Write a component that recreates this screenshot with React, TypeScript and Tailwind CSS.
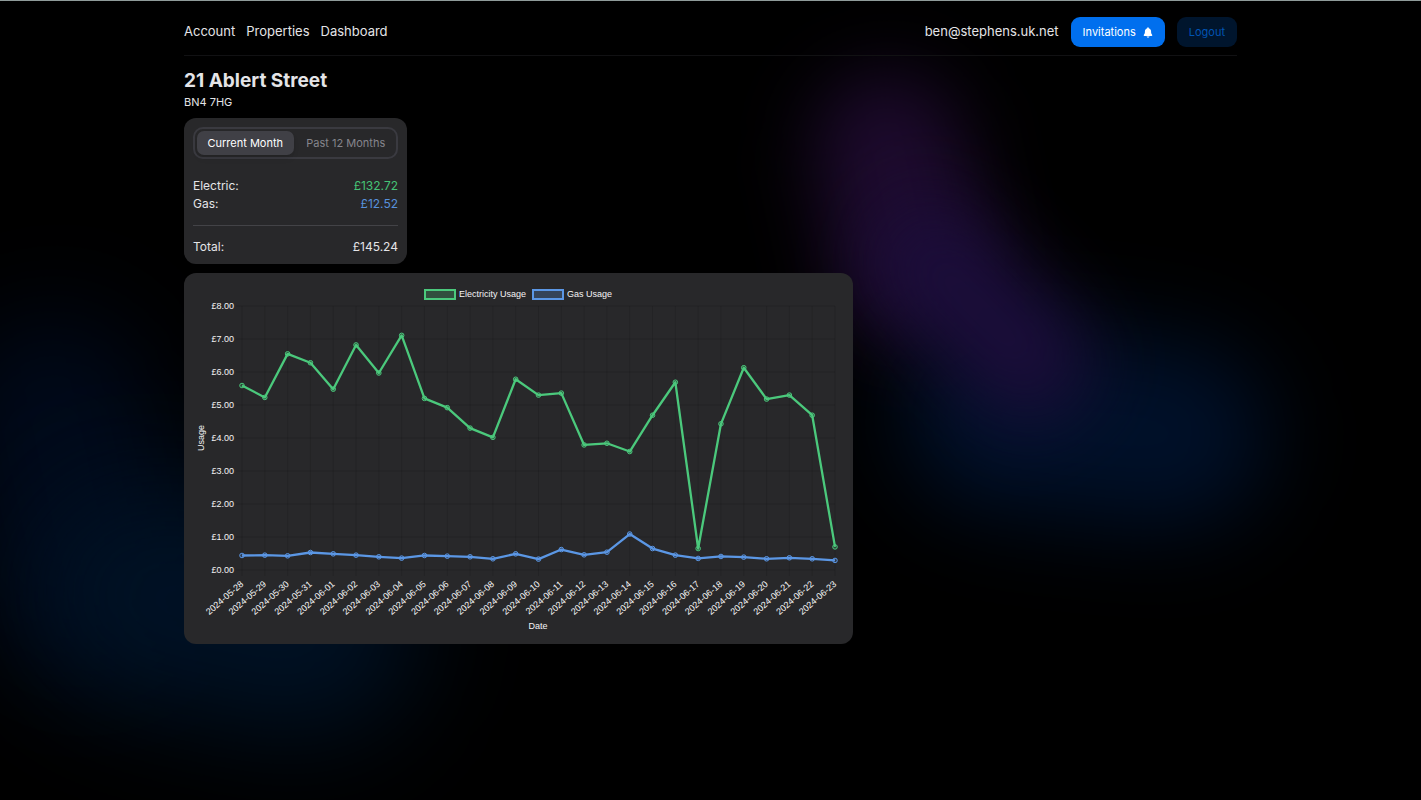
import { useState } from "react";

const navLinks = ["Account", "Properties", "Dashboard"];
const periods = ["Current Month", "Past 12 Months"];

const usage = [
  { date: "2024-05-28", electric: 5.59, gas: 0.44 },
  { date: "2024-05-29", electric: 5.23, gas: 0.45 },
  { date: "2024-05-30", electric: 6.55, gas: 0.43 },
  { date: "2024-05-31", electric: 6.28, gas: 0.53 },
  { date: "2024-06-01", electric: 5.48, gas: 0.49 },
  { date: "2024-06-02", electric: 6.82, gas: 0.45 },
  { date: "2024-06-03", electric: 5.97, gas: 0.4 },
  { date: "2024-06-04", electric: 7.11, gas: 0.36 },
  { date: "2024-06-05", electric: 5.2, gas: 0.44 },
  { date: "2024-06-06", electric: 4.92, gas: 0.42 },
  { date: "2024-06-07", electric: 4.3, gas: 0.4 },
  { date: "2024-06-08", electric: 4.02, gas: 0.34 },
  { date: "2024-06-09", electric: 5.78, gas: 0.49 },
  { date: "2024-06-10", electric: 5.3, gas: 0.33 },
  { date: "2024-06-11", electric: 5.36, gas: 0.62 },
  { date: "2024-06-12", electric: 3.79, gas: 0.46 },
  { date: "2024-06-13", electric: 3.84, gas: 0.54 },
  { date: "2024-06-14", electric: 3.59, gas: 1.09 },
  { date: "2024-06-15", electric: 4.69, gas: 0.65 },
  { date: "2024-06-16", electric: 5.69, gas: 0.45 },
  { date: "2024-06-17", electric: 0.65, gas: 0.35 },
  { date: "2024-06-18", electric: 4.43, gas: 0.41 },
  { date: "2024-06-19", electric: 6.13, gas: 0.39 },
  { date: "2024-06-20", electric: 5.18, gas: 0.34 },
  { date: "2024-06-21", electric: 5.3, gas: 0.37 },
  { date: "2024-06-22", electric: 4.69, gas: 0.34 },
  { date: "2024-06-23", electric: 0.7, gas: 0.29 },
];

const GREEN = "#4bc97c";
const BLUE = "#5b97e5";

// Plot area inside the 669x371 chart
const plot = { left: 58, right: 651, top: 33, bottom: 297 };
const x = (i: number) => plot.left + (i * (plot.right - plot.left)) / (usage.length - 1);
const y = (v: number) => plot.bottom - (v * (plot.bottom - plot.top)) / 8;

function Series({ values, color }: { values: number[]; color: string }) {
  return (
    <g stroke={color}>
      <polyline points={values.map((v, i) => `${x(i)},${y(v)}`).join(" ")} fill="none" strokeWidth="2.3" strokeLinejoin="round" />
      {values.map((v, i) => (
        <circle key={i} cx={x(i)} cy={y(v)} r="2.3" fill={color} fillOpacity="0.2" strokeWidth="1" />
      ))}
    </g>
  );
}

function UsageChart() {
  return (
    <svg viewBox="0 0 669 371" className="block w-full h-auto font-['Liberation_Sans',Arial,sans-serif] text-[9px]" fill="#f4f4f5" role="img" aria-label="Electricity and gas usage by date">
      {/* Legend */}
      <rect x="241" y="17" width="30" height="9" fill={GREEN} fillOpacity="0.25" stroke={GREEN} strokeWidth="2" />
      <text x="275" y="24">Electricity Usage</text>
      <rect x="349" y="17" width="30" height="9" fill={BLUE} fillOpacity="0.25" stroke={BLUE} strokeWidth="2" />
      <text x="383" y="24">Gas Usage</text>

      {/* Grid */}
      <g stroke="#000" strokeOpacity="0.11" strokeWidth="1">
        {[0, 1, 2, 3, 4, 5, 6, 7, 8].map((v) => (
          <line key={v} x1={plot.left - 6} x2={plot.right} y1={y(v)} y2={y(v)} />
        ))}
        {usage.map((d, i) => (
          <line key={d.date} x1={x(i)} x2={x(i)} y1={plot.top} y2={plot.bottom + 6} />
        ))}
      </g>

      {/* Axes */}
      {[0, 1, 2, 3, 4, 5, 6, 7, 8].map((v) => (
        <text key={v} x="50" y={y(v) + 3} textAnchor="end">{`£${v}.00`}</text>
      ))}
      {usage.map((d, i) => (
        <text key={d.date} textAnchor="end" transform={`translate(${x(i) + 2} ${plot.bottom + 15}) rotate(-41)`}>{d.date}</text>
      ))}
      <text textAnchor="middle" transform="translate(20 165) rotate(-90)">Usage</text>
      <text x="354" y="356" textAnchor="middle">Date</text>

      <Series values={usage.map((d) => d.gas)} color={BLUE} />
      <Series values={usage.map((d) => d.electric)} color={GREEN} />
    </svg>
  );
}

function BellIcon({ className }: { className?: string }) {
  return (
    <svg viewBox="0 0 20 24" fill="currentColor" className={className} aria-hidden="true">
      <path d="M10 0.500c-1 0-1.700.7-1.700 1.600v.4C5.200 3.300 3.300 6 3.300 9.400c0 4.200-.7 5.800-2.300 7.600-.9 1.100-.3 2.500 1 2.500h16c1.300 0 1.900-1.400 1-2.500-1.600-1.800-2.300-3.400-2.300-7.600 0-3.400-1.900-6.100-5-6.900v-.4C11.700 1.200 11 .5 10 .5ZM6.800 20.800c.5 1.500 1.700 2.400 3.200 2.400s2.700-.9 3.200-2.400H6.800Z" />
    </svg>
  );
}

function Backdrop() {
  return (
    <div className="absolute inset-0 overflow-hidden pointer-events-none" aria-hidden="true">
      <div className="absolute left-[-30px] top-[310px] w-[200px] h-[360px] -rotate-12 rounded-full bg-[#00091a] blur-[50px]" />
      <div className="absolute left-[30px] top-[500px] w-[390px] h-[220px] rotate-12 rounded-full bg-[#001124] blur-[55px]" />
      <div className="absolute left-[825px] top-[70px] w-[150px] h-[270px] -rotate-12 rounded-full bg-[#1d0a2d] blur-[38px]" />
      <div className="absolute left-[900px] top-[330px] w-[370px] h-[190px] rotate-6 rounded-full bg-[#001029] blur-[45px]" />
      <div className="absolute left-[850px] top-[250px] w-[260px] h-[120px] rotate-45 rounded-full bg-[#1b0d3a] blur-[36px]" />
    </div>
  );
}

export default function App() {
  const [period, setPeriod] = useState(0);

  return (
    <div className="relative min-h-screen bg-black border-t border-[#8f9b9a] text-[#e4e4e7] font-[Inter,sans-serif]">
      <Backdrop />

      <div className="relative w-full max-w-[1053px] mx-auto">
        {/* Navigation */}
        <header className="flex items-center justify-between h-[55px] pt-2 border-b border-[#111113] text-[13px]">
          <nav className="flex items-center gap-[11px]">
            {navLinks.map((label) => (
              <a key={label} href="#">{label}</a>
            ))}
          </nav>
          <div className="flex items-center gap-3">
            <span>ben@stephens.uk.net</span>
            <button className="flex items-center gap-[7px] h-[30px] px-3 rounded-[9px] bg-[#006fee] text-white text-[11px]">
              Invitations
              <BellIcon className="w-[10px] h-[11px]" />
            </button>
            <button className="h-[30px] px-3 rounded-[9px] bg-[#00152d] text-[#0054b4] text-[11px]">Logout</button>
          </div>
        </header>

        <main>
          <h1 className="mt-[11px] text-[19px] leading-7 font-bold">21 Ablert Street</h1>
          <p className="text-[11px] leading-[14px]">BN4 7HG</p>

          <div className="mt-[9px] w-[669px] max-w-full flex flex-col gap-[9px]">
            {/* Cost summary */}
            <section className="w-1/3 h-[146px] p-[9px] rounded-xl bg-[#28282a] text-[12px]">
              <div role="tablist" className="flex gap-1 h-8 p-0.5 rounded-[10px] border-2 border-[#3a3a40] text-[11px]">
                {periods.map((label, i) => (
                  <button
                    key={label}
                    role="tab"
                    aria-selected={i === period}
                    onClick={() => setPeriod(i)}
                    className={`flex-1 whitespace-nowrap rounded-[7px] ${i === period ? "bg-[#404046] text-white shadow-md" : "text-[#85858c]"}`}
                  >
                    {label}
                  </button>
                ))}
              </div>
              <dl className="mt-[18px] leading-[18px]">
                <div className="flex justify-between">
                  <dt>Electric:</dt>
                  <dd className="text-[#45c376]">£132.72</dd>
                </div>
                <div className="flex justify-between">
                  <dt>Gas:</dt>
                  <dd className="text-[#5791dc]">£12.52</dd>
                </div>
                <div className="flex justify-between mt-3 pt-3 border-t border-[#434347]">
                  <dt>Total:</dt>
                  <dd>£145.24</dd>
                </div>
              </dl>
            </section>

            {/* Daily usage */}
            <section className="rounded-xl bg-[#28282a]">
              <UsageChart />
            </section>
          </div>
        </main>
      </div>
    </div>
  );
}
